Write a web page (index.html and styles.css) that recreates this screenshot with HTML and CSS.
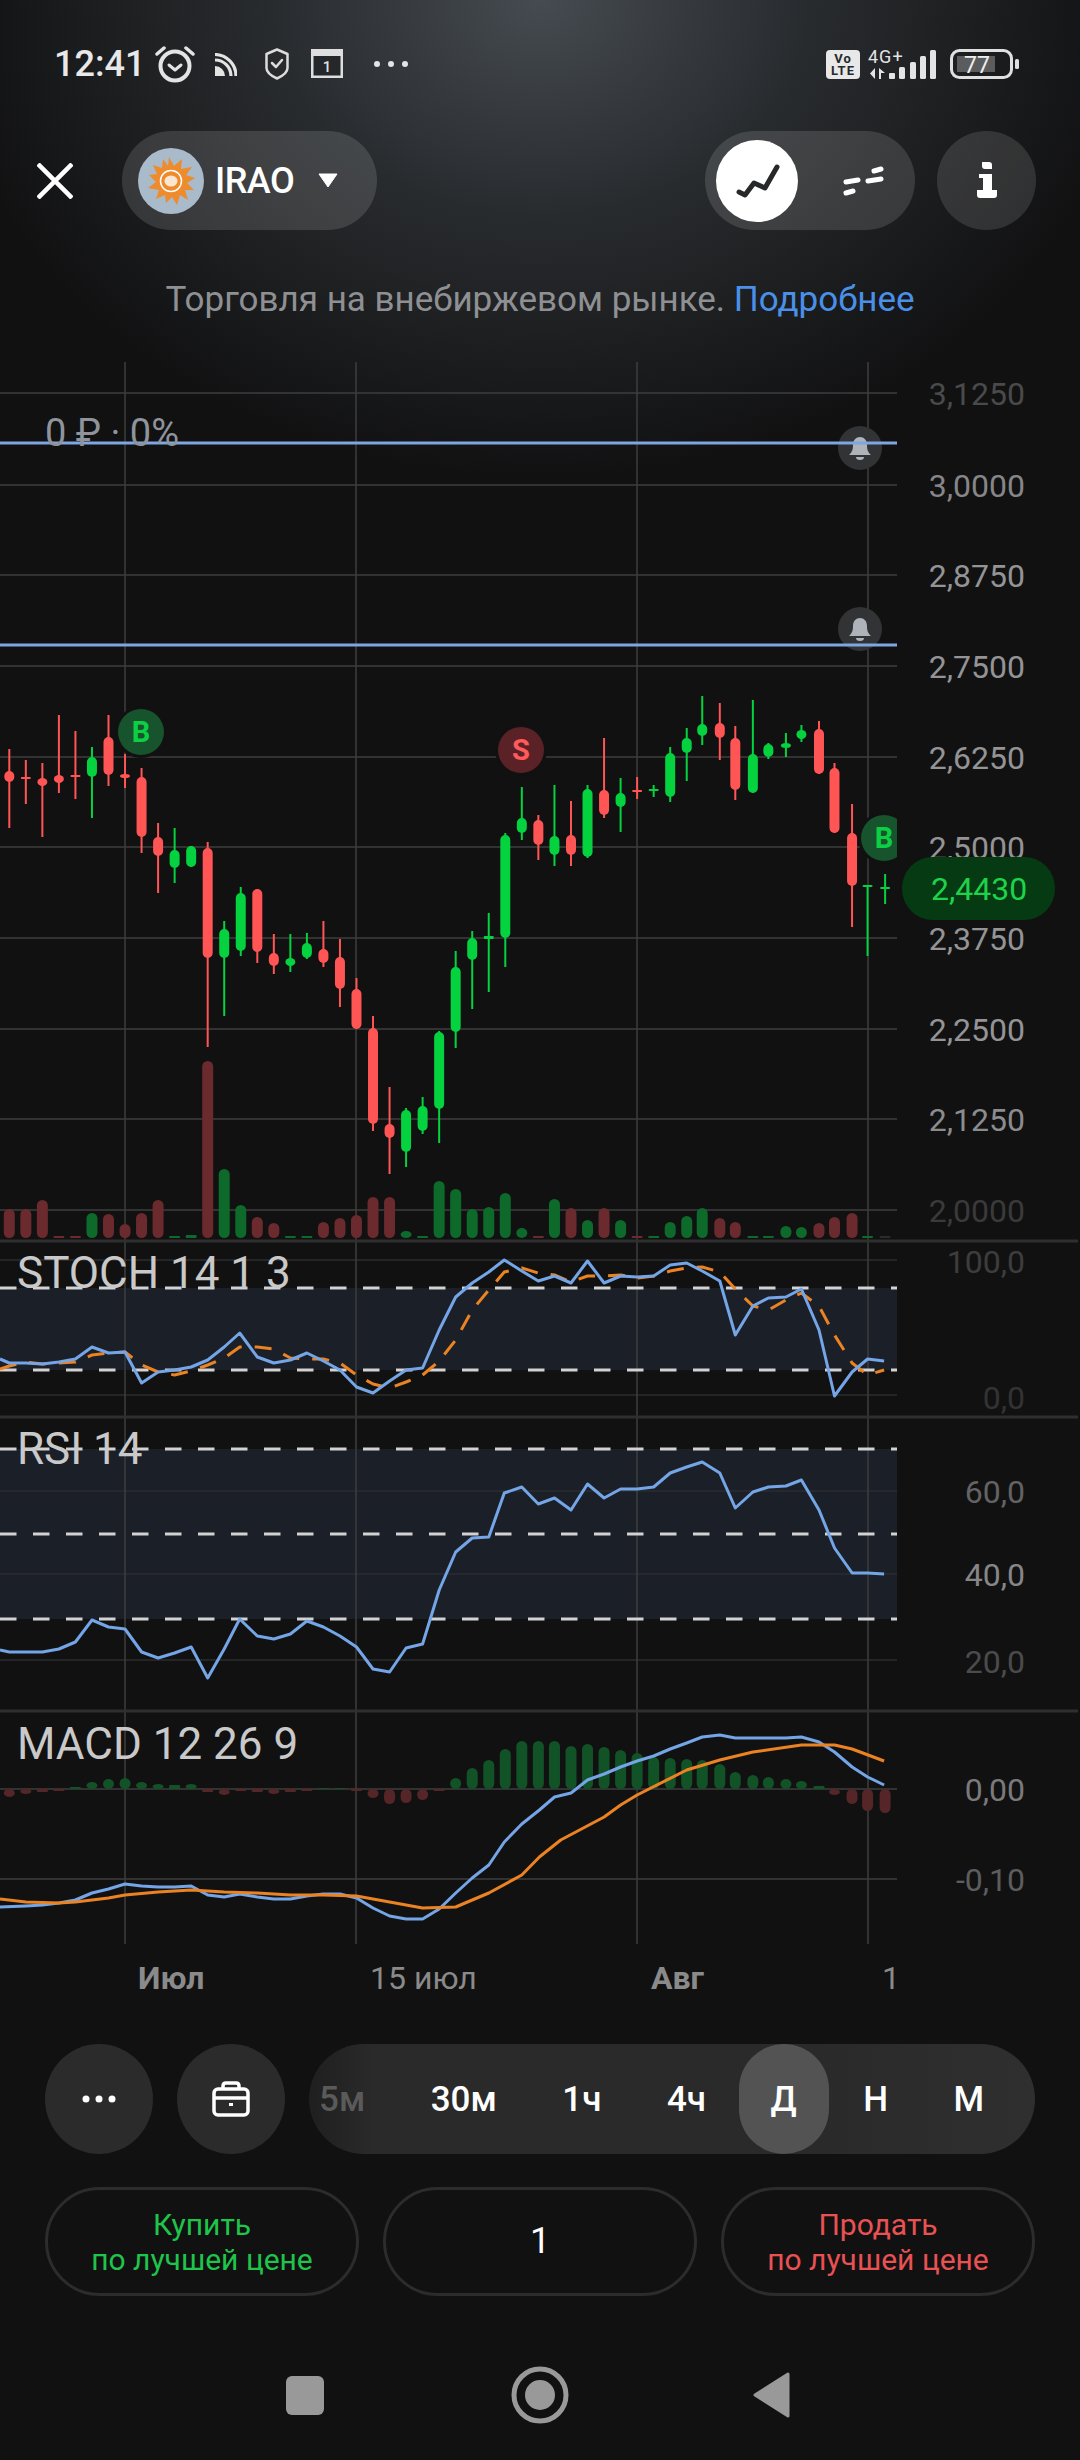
FILE: index.html
```html
<!DOCTYPE html>
<html lang="en">
<head>
    <meta charset="UTF-8">
    <meta name="viewport" content="width=device-width, initial-scale=1.0">
    <title>IRAO</title>
    <link rel="stylesheet" href="styles.css">
</head>
<body>
    <div class="page">
        <div class="status">
            <span class="clock">12:41</span>
            <svg class="st-alarm" width="40" height="38" viewBox="0 0 40 38" fill="none" stroke="#e4e4e4">
                <circle cx="20" cy="21" r="14.5" stroke-width="4"/>
                <path d="M14 20l6 5 6-5" stroke-width="3" stroke-linecap="round" stroke-linejoin="round"/>
                <path d="M2 9l7-6M38 9l-7-6" stroke-width="3.5" stroke-linecap="round"/>
            </svg>
            <svg class="st-rss" width="22" height="23" viewBox="0 0 22 23" fill="none" stroke="#e4e4e4" stroke-width="3.2">
                <path d="M0 7a16 16 0 0 1 16 16"/>
                <path d="M0 1.500a21.500 21.500 0 0 1 21 21.500"/>
                <path d="M0 13a10 10 0 0 1 10 10H0z" fill="#e4e4e4" stroke="none"/>
            </svg>
            <svg class="st-shield" width="24" height="32" viewBox="0 0 24 32" fill="none" stroke="#dcdcdc">
                <path d="M12 1.500 22.500 6v14c0 4-5 8-10.500 10.500C6.500 28 1.500 24 1.500 20V6z" stroke-width="2.500" stroke-linejoin="round"/>
                <path d="M7 15l4 4 6-7" stroke-width="2.500" stroke-linecap="round" stroke-linejoin="round"/>
            </svg>
            <svg class="st-cal" width="32" height="29" viewBox="0 0 32 29">
                <path d="M0 0h32v29H0z" fill="#dedede"/>
                <path d="M2.500 7h27v19.500h-27z" fill="#25282b"/>
                <text x="16" y="23" class="st-cal-num">1</text>
            </svg>
            <svg class="st-dots" width="36" height="8" viewBox="0 0 36 8" fill="#e4e4e4">
                <circle cx="4" cy="4" r="3"/><circle cx="18" cy="4" r="3"/><circle cx="32" cy="4" r="3"/>
            </svg>

            <svg class="st-net" width="114" height="42" viewBox="0 -6 114 42">
                <rect x="0" y="1" width="34" height="29" rx="4" fill="#e8e8e8"/>
                <text x="17" y="14" class="st-volte">Vo</text>
                <text x="17" y="26" class="st-volte">LTE</text>
                <text x="42" y="14" class="st-4g">4G+</text>
                <path d="M49 19v11l-5-5.500zM53 19v11h2v-6h4z" fill="#e4e4e4"/>
                <rect x="63" y="24" width="6" height="6" rx="1" fill="#e4e4e4"/>
                <rect x="73" y="18" width="6" height="12" rx="1.500" fill="#e4e4e4"/>
                <rect x="84" y="13" width="6" height="17" rx="1.500" fill="#e4e4e4"/>
                <rect x="94" y="7" width="6" height="23" rx="1.500" fill="#e4e4e4"/>
                <rect x="104" y="1" width="6" height="29" rx="1.500" fill="#e4e4e4"/>
            </svg>
            <svg class="st-batt" width="69" height="30" viewBox="0 0 69 30">
                <rect x="1.500" y="1.500" width="60" height="27" rx="8" fill="none" stroke="#e0e0e0" stroke-width="3"/>
                <rect x="7" y="7" width="38" height="16" fill="#5a5c5e"/>
                <text x="27" y="24" class="st-batt-num">77</text>
                <rect x="65" y="10" width="4" height="10" rx="1.500" fill="#e0e0e0"/>
            </svg>
        </div>

        <div class="nav">
            <svg class="close" width="36" height="36" viewBox="0 0 36 36" stroke="#fff" stroke-width="4.500">
                <path d="M1 1l34 34M35 1 1 35"/>
            </svg>
            <div class="ticker">
                <svg class="logo" width="66" height="66" viewBox="-33 -33 66 66">
                    <circle r="33" fill="#a9bacb"/>
                    <polygon fill="#ee8b2d" points="-2,-24 3,-15 11,-22 10,-12 21,-14 15,-6 24,-3 16,2 23,9 14,9 17,19 9,14 6,24 1,16 -5,22 -6,14 -15,18 -12,9 -23,7 -15,1 -22,-6 -14,-7 -18,-16 -9,-13 -8,-22 -3,-15"/>
                    <circle r="10.500" fill="#ee8b2d" stroke="#fff" stroke-width="1.500"/>
                    <ellipse rx="6.500" ry="5.500" fill="#fbe6d0"/>
                </svg>
                <span class="ticker-name">IRAO</span>
                <svg class="ticker-arrow" width="20" height="15" viewBox="0 0 20 15"><path d="M1 1h18L10 14z" fill="#fff" stroke="#fff" stroke-linejoin="round"/></svg>
            </div>
            <div class="modes">
                <div class="mode-on">
                    <svg width="82" height="82" viewBox="0 0 82 82" fill="none" stroke="#26282a" stroke-width="5" stroke-linecap="round" stroke-linejoin="round">
                        <path d="M23 52l6 3 9-12 11 5 12-21"/>
                    </svg>
                </div>
                <div class="mode-off">
                    <svg width="48" height="48" viewBox="0 0 48 48" fill="none" stroke="#fff" stroke-width="5" stroke-linecap="round">
                        <path d="M7 25l12-2M29 24l13-2M35 14l7-2M7 36l7-2"/>
                    </svg>
                </div>
            </div>
            <div class="info">
                <svg width="40" height="40" viewBox="-20 -20 40 40" fill="#fff">
                    <path d="M-5-19h7q3 0 3 3v4h-7q-3 0-3-3zM-8-7H5V9h5v5q0 3-3 3H-7q-3 0-3-3V9h6V-3h-4z"/>
                </svg>
            </div>
        </div>

        <div class="note">Торговля на внебиржевом рынке. <span class="note-link">Подробнее</span></div>

        <div id="chart" class="chart"></div>

        <div class="tools">
            <div class="round-btn">
                <svg width="36" height="8" viewBox="0 0 36 8" fill="#fff"><circle cx="5" cy="4" r="3.500"/><circle cx="18" cy="4" r="3.500"/><circle cx="31" cy="4" r="3.500"/></svg>
            </div>
            <div class="round-btn">
                <svg width="38" height="36" viewBox="0 0 38 36" fill="none" stroke="#fff" stroke-width="3.500" stroke-linejoin="round">
                    <rect x="2" y="8" width="34" height="26" rx="4"/>
                    <path d="M11 8V5q0-3 3-3h10q3 0 3 3v3M2 17h34"/>
                    <path d="M17 22h4v3h-4z" fill="#fff" stroke="none"/>
                </svg>
            </div>
            <div class="frames">
                <span class="frame frame-dim">5м</span>
                <span class="frame">30м</span>
                <span class="frame">1ч</span>
                <span class="frame">4ч</span>
                <span class="frame frame-on">Д</span>
                <span class="frame">Н</span>
                <span class="frame">М</span>
            </div>
        </div>

        <div class="actions">
            <div class="action action-buy">Купить<br>по лучшей цене</div>
            <div class="action action-qty">1</div>
            <div class="action action-sell">Продать<br>по лучшей цене</div>
        </div>

        <div class="sysnav">
            <div class="sys-square"></div>
            <svg width="58" height="58" viewBox="0 0 58 58" fill="none" stroke="#999">
                <circle cx="29" cy="29" r="26" stroke-width="5"/>
                <circle cx="29" cy="29" r="15" fill="#999" stroke="none"/>
            </svg>
            <svg width="38" height="46" viewBox="0 0 38 46">
                <path d="M35 2 2 23l33 21z" fill="#999" stroke="#999" stroke-width="3" stroke-linejoin="round"/>
            </svg>
        </div>
    </div>

    <script src="chart.js"></script>
</body>
</html>
```

FILE: styles.css
```css
* {
    box-sizing: border-box;
}
body {
    margin: 0;
    background-color: #111112;
    font-family: Roboto, 'Liberation Sans', sans-serif;
    color: #fff;
}
.page {
    width: 1080px;
    height: 2460px;
    overflow: hidden;
    background:
        radial-gradient(ellipse 600px 480px at 50% 0, rgba(72, 78, 84, 0.95) 0%, rgba(50, 54, 58, 0.7) 45%, rgba(17, 17, 18, 0) 100%),
        #111112;
}

/* status bar */
.status {
    display: flex;
    align-items: flex-start;
    height: 131px;
    padding: 45px 0 0 54px;
}
.clock {
    font-size: 36px;
    font-weight: 500;
    line-height: 38px;
    color: #e8e8e8;
}
.st-alarm { margin-left: 10px; }
.st-rss { margin: 8px 0 0 20px; }
.st-shield { margin: 3px 0 0 28px; }
.st-cal { margin: 4px 0 0 22px; }
.st-dots { margin: 15px 0 0 30px; }
.st-net { margin: -2px 0 0 auto; }
.st-batt { margin: 4px 61px 0 10px; }
.st-cal-num {
    font-size: 15px;
    font-weight: 500;
    fill: #e0e0e0;
    text-anchor: middle;
}
.st-volte {
    font-size: 13px;
    font-weight: 700;
    letter-spacing: 1px;
    fill: #26282a;
    text-anchor: middle;
}
.st-4g {
    font-size: 18px;
    letter-spacing: 1px;
    fill: #e4e4e4;
}
.st-batt-num {
    font-size: 23px;
    fill: #eee;
    text-anchor: middle;
}

/* top controls */
.nav {
    display: flex;
    align-items: center;
    height: 99px;
    padding: 0 44px 0 37px;
}
.close {
    margin-right: 49px;
}
.ticker {
    display: flex;
    align-items: center;
    width: 255px;
    height: 99px;
    padding-left: 16px;
    border-radius: 50px;
    background-color: rgba(255, 255, 255, 0.13);
}
.ticker-name {
    margin-left: 11px;
    font-size: 36px;
    font-weight: 500;
    letter-spacing: -0.5px;
}
.ticker-arrow {
    margin-left: 24px;
}
.modes {
    display: flex;
    align-items: center;
    width: 210px;
    height: 99px;
    margin-left: auto;
    padding-left: 11px;
    border-radius: 50px;
    background-color: rgba(255, 255, 255, 0.13);
}
.mode-on {
    width: 82px;
    height: 82px;
    border-radius: 50%;
    background-color: #fff;
}
.mode-off {
    width: 48px;
    height: 48px;
    margin-left: 41px;
}
.info {
    display: flex;
    justify-content: center;
    align-items: center;
    width: 99px;
    height: 99px;
    margin-left: 22px;
    border-radius: 50%;
    background-color: rgba(255, 255, 255, 0.12);
}
.note {
    height: 132px;
    padding-top: 50px;
    font-size: 35px;
    line-height: 40px;
    text-align: center;
    color: #8e9093;
}
.note-link {
    color: #4a8fe8;
}

/* chart */
.chart {
    height: 1638px;
}
.chart svg {
    display: block;
}
.grid {
    stroke: #3e3e3f;
    stroke-width: 1.5;
}
.grid-faint {
    stroke: #2b2c2f;
    stroke-width: 1.5;
}
.sep {
    stroke: #2f2f30;
    stroke-width: 3;
}
.band {
    fill: #1b1f28;
}
.dash {
    stroke: #d2d2d2;
    stroke-width: 3;
    stroke-dasharray: 16.500 16.500;
}
.alert-line {
    stroke: #7fa6e2;
    stroke-width: 3;
}
.blue-line {
    fill: none;
    stroke: #74a5e6;
    stroke-width: 3;
    stroke-linejoin: round;
}
.orange-line {
    fill: none;
    stroke: #ec8322;
    stroke-width: 3;
    stroke-linejoin: round;
}
.orange-dash {
    stroke-dasharray: 17 13;
}
.axis {
    font-size: 32px;
    text-anchor: end;
}
.pane-title {
    font-size: 44px;
    fill: #c9c9c9;
}
.pnl {
    font-size: 38px;
    fill: #8f949c;
}
.time {
    font-size: 32px;
    fill: #8a8a8a;
}
.time-bold {
    font-weight: 700;
}
.badge {
    font-size: 29px;
    font-weight: 700;
    text-anchor: middle;
}
.price-tag {
    font-size: 32px;
    fill: #1fd24c;
    text-anchor: middle;
}

/* bottom controls */
.tools {
    display: flex;
    gap: 24px;
    height: 110px;
    margin-top: 44px;
    padding: 0 45px;
}
.round-btn {
    display: flex;
    flex: none;
    justify-content: center;
    align-items: center;
    width: 108px;
    height: 110px;
    border-radius: 50%;
    background-color: #2b2b2b;
}
.frames {
    display: flex;
    flex: 1;
    align-items: center;
    gap: 65.500px;
    padding-left: 10px;
    border-radius: 55px;
    background: linear-gradient(90deg, #1f1f1f 0%, #2a2a2a 9%, #2a2a2a 70%, #2f2f2f 100%);
    font-size: 35px;
    font-weight: 500;
}
.frame-dim {
    color: #5a5a5a;
}
.frame-on {
    display: flex;
    align-items: center;
    height: 110px;
    margin: 0 -31px 0 -33px;
    padding: 0 32px;
    border-radius: 45px;
    background-color: #535353;
}
.actions {
    display: flex;
    gap: 24px;
    height: 109px;
    margin-top: 33px;
    padding: 0 45px;
}
.action {
    display: flex;
    flex: 1;
    justify-content: center;
    align-items: center;
    border: 3px solid #2c2c2d;
    border-radius: 55px;
    font-size: 30px;
    line-height: 35px;
    text-align: center;
}
.action-buy {
    color: #1fc44a;
}
.action-sell {
    color: #e85252;
}
.action-qty {
    font-size: 36px;
}
.sysnav {
    display: flex;
    align-items: center;
    gap: 184px;
    height: 58px;
    margin-top: 70px;
    padding-left: 286px;
}
.sys-square {
    width: 38px;
    height: 39px;
    margin-right: 3px;
    border-radius: 6px;
    background-color: #999;
}
```

FILE: chart.js
```js
const NS = 'http://www.w3.org/2000/svg';
const PLOT_RIGHT = 897;
const RED = '#ff5555';
const GREEN = '#05d23f';

// data x values are sampled at 0.968 horizontal scale, sx() puts them on the page
function sx(x) {
    return x < 530 ? x * 1.0333 : 540 + (x - 540) * 1.0333;
}

function points(str) {
    return str.split(' ').map(p => {
        const parts = p.split(',');
        return sx(+parts[0]).toFixed(1) + ',' + parts[1];
    }).join(' ');
}

// x, wick top, wick bottom, body top, body bottom, up?
const candles = [
    [9,749,828,771,782,0],[25,760,804,777,779,0],[41,763,837,778,786,0],[57,715,793,775,783,0],
    [73,731,799,775,777,0],[89,747,818,757,777,1],[105,715,786,737,775,0],[121,754,788,774,778,0],
    [137,768,853,777,837,0],[153,823,893,837,856,0],[169,828,883,850,868,1],[185,846,867,846,867,1],
    [201,842,1047,848,958,0],[217,921,1016,929,958,1],[233,887,956,893,951,1],[249,889,963,889,952,0],
    [265,934,974,953,966,0],[281,934,972,958,966,1],[297,933,959,943,958,1],[313,921,967,949,963,0],
    [329,939,1007,957,989,0],[345,978,1029,989,1029,0],[361,1016,1131,1028,1124,0],[377,1087,1174,1124,1138,0],
    [393,1108,1167,1110,1152,1],[409,1097,1134,1106,1131,1],[425,1031,1143,1032,1109,1],[441,951,1048,967,1032,1],
    [457,931,1009,938,960,1],[473,913,992,936,939,1],[489,833,967,835,938,1],[505,787,840,818,833,1],
    [521,815,860,820,845,0],[554,785,866,836,855,1],[570,801,866,835,855,0],[586,785,858,789,857,1],
    [602,738,818,790,815,0],[618,778,832,793,807,1],[634,777,799,790,792,0],[650,785,797,789,791,1],
    [666,747,802,753,797,1],[682,728,781,738,753,1],[697,696,745,724,736,1],[714,703,760,723,738,0],
    [729,726,800,738,790,0],[746,700,793,754,793,1],[761,743,759,744,757,1],[778,733,757,743,748,1],
    [793,725,742,730,739,1],[810,721,774,729,774,0],[825,763,833,768,833,0],[842,804,927,833,886,0],
    [857,885,956,885,887,1],[874,874,904,887,889,1]
];

// x, top of bar, up?  (base is at 1238)
const volumes = [
    [9,1209,0],[25,1209,0],[41,1200,0],[57,1236,0],[73,1236,0],[89,1213,1],[105,1214,0],[121,1224,0],
    [137,1213,0],[153,1200,0],[169,1236,1],[185,1235,1],[201,1061,0],[217,1169,1],[233,1205,1],[249,1217,0],
    [265,1223,0],[281,1236,1],[297,1236,1],[313,1222,0],[329,1218,0],[345,1215,0],[361,1197,0],[377,1197,0],
    [393,1231,1],[409,1236,1],[425,1181,1],[441,1189,1],[457,1209,1],[473,1207,1],[489,1193,1],[505,1228,1],
    [521,1236,0],[554,1199,1],[570,1208,0],[586,1220,1],[602,1208,0],[618,1220,1],[634,1236,0],[650,1236,1],
    [666,1222,1],[682,1216,1],[697,1208,1],[714,1218,0],[729,1222,0],[746,1236,1],[761,1236,1],[778,1226,1],
    [793,1227,1],[810,1223,0],[825,1217,0],[842,1213,0],[857,1236,1],[874,1236,2]
];

// x, end of bar (zero line is at 1789)
const histogram = [
    [9,1797],[25,1794],[41,1792],[57,1791],[73,1787],[89,1782],[105,1779],[121,1778],[137,1782],[153,1784],
    [169,1785],[185,1784],[201,1792],[217,1795],[233,1791],[249,1792],[265,1794],[281,1792],[297,1791],[313,1788],
    [329,1788],[345,1791],[361,1798],[377,1804],[393,1803],[409,1800],[425,1791],[441,1778],[457,1768],[473,1760],
    [489,1749],[505,1741],[521,1741],[554,1741],[570,1746],[586,1744],[602,1747],[618,1750],[634,1753],
    [650,1757],[666,1758],[682,1759],[697,1760],[714,1764],[729,1772],[746,1775],[761,1777],[778,1779],[793,1781],
    [810,1786],[825,1795],[842,1804],[857,1811],[874,1813]
];

const stochBlue = '0,1359 9,1363 25,1363 41,1364 57,1362 73,1359 89,1347 105,1353 121,1352 137,1383 153,1372 169,1370 185,1367 201,1360 217,1347 232,1333 249,1357 265,1363 281,1360 297,1353 313,1361 329,1370 345,1387 361,1393 377,1381 393,1370 409,1368 425,1330 441,1297 457,1283 473,1272 488,1260 505,1271 521,1281 554,1276 570,1283 586,1261 602,1283 618,1276 634,1277 650,1276 666,1265 682,1263 697,1271 714,1281 729,1335 746,1306 761,1298 778,1297 793,1289 810,1330 825,1396 842,1372 857,1359 873,1361';
const stochOrange = '0,1369 9,1366 25,1362 41,1364 57,1363 73,1362 89,1355 105,1353 121,1352 137,1365 153,1372 169,1375 185,1371 201,1365 217,1358 232,1347 249,1347 265,1349 281,1358 297,1359 313,1359 329,1363 345,1375 361,1384 377,1388 393,1382 409,1375 425,1361 441,1340 457,1310 473,1290 488,1272 505,1268 521,1273 554,1275 570,1282 586,1276 602,1276 618,1275 634,1278 650,1276 666,1271 682,1268 697,1267 714,1272 729,1289 746,1306 761,1310 778,1300 793,1293 810,1306 825,1335 842,1363 857,1375 873,1370';
const rsiBlue = '0,1650 9,1652 25,1652 41,1652 57,1649 73,1642 89,1620 105,1627 121,1629 137,1652 153,1658 169,1653 185,1647 201,1678 217,1649 232,1619 249,1636 265,1639 281,1634 297,1621 313,1627 329,1636 345,1647 361,1669 377,1672 393,1648 409,1644 425,1590 441,1552 457,1538 473,1537 488,1493 505,1487 521,1504 554,1498 570,1510 586,1484 602,1498 618,1489 634,1489 650,1487 666,1473 682,1467 697,1462 714,1473 729,1508 746,1492 761,1487 778,1486 793,1480 810,1510 825,1548 842,1573 857,1573 873,1574';
const macdBlue = '0,1907 25,1906 41,1905 57,1903 73,1900 89,1893 105,1889 121,1884 137,1886 153,1887 169,1887 185,1886 201,1895 217,1897 232,1894 249,1897 265,1899 281,1899 297,1896 313,1894 329,1894 345,1898 361,1908 377,1916 393,1919 409,1919 425,1909 441,1893 457,1878 473,1865 488,1842 505,1824 522,1810 554,1797 570,1793 586,1780 602,1774 618,1767 634,1761 650,1756 666,1749 682,1743 697,1737 714,1735 729,1738 746,1738 761,1738 778,1738 793,1737 810,1742 825,1752 842,1767 857,1777 873,1785';
const macdOrange = '0,1899 25,1902 57,1903 73,1902 89,1900 105,1898 121,1895 153,1892 185,1890 217,1892 249,1893 281,1895 313,1895 345,1896 377,1902 409,1908 441,1907 473,1893 505,1875 522,1857 560,1840 602,1817 618,1805 634,1795 682,1770 714,1760 746,1752 793,1745 825,1745 842,1749 873,1761';

// text, y, colour
const priceLabels = [
    ['3,1250',393,'#4a4a4b'],['3,0000',485,'#868688'],['2,8750',575,'#949496'],['2,7500',666,'#949496'],
    ['2,6250',757,'#949496'],['2,5000',847,'#949496'],['2,3750',938,'#949496'],['2,2500',1029,'#949496'],
    ['2,1250',1119,'#8c8c8e'],['2,0000',1210,'#3a3a3b'],['100,0',1261,'#3d3d3e'],['0,0',1397,'#333334'],
    ['60,0',1491,'#636364'],['40,0',1574,'#868688'],['20,0',1661,'#4b4b4c'],['0,00',1789,'#7a7a7c'],['-0,10',1879,'#5d5d5e']
];

const gridY = [393,485,575,666,757,847,938,1029,1119,1210,1789,1879];
const faintY = [1260,1395,1491,1574,1660];
const gridX = [125,356,637,868];
const dashY = [1288,1370,1449,1534,1619];

const svg = document.createElementNS(NS, 'svg');
svg.setAttribute('width', 1080);
svg.setAttribute('height', 1638);
svg.setAttribute('viewBox', '0 362 1080 1638');
document.getElementById('chart').appendChild(svg);

function add(tag, attrs, parent) {
    const el = document.createElementNS(NS, tag);
    for (const key in attrs) el.setAttribute(key, attrs[key]);
    (parent || svg).appendChild(el);
    return el;
}

function addText(str, attrs) {
    add('text', attrs).textContent = str;
}

function hline(y, cls, right) {
    add('line', {x1: 0, x2: right || PLOT_RIGHT, y1: y, y2: y, class: cls});
}

function badge(x, y, letter, bg, fg) {
    add('circle', {cx: x, cy: y, r: 26, fill: '#111112', 'clip-path': 'url(#plot)'});
    add('circle', {cx: x, cy: y, r: 23, fill: bg, 'clip-path': 'url(#plot)'});
    addText(letter, {x: x, y: y + 10, fill: fg, class: 'badge', 'clip-path': 'url(#plot)'});
}

function bell(cx, cy) {
    add('circle', {cx: cx, cy: cy, r: 22, fill: '#323334'});
    add('path', {
        d: 'M-11 8c3-3 4-5 4-10 0-5 3-8 7-8s7 3 7 8c0 5 1 7 4 10zM-4 10a4 3 0 0 0 8 0z',
        transform: `translate(${cx} ${cy - 1})`,
        fill: '#aeb3ba'
    });
}

// clip for everything that stops at the price axis
const defs = add('defs', {});
const clip = add('clipPath', {id: 'plot'}, defs);
add('rect', {x: 0, y: 362, width: PLOT_RIGHT, height: 1638}, clip);

// indicator bands
add('rect', {x: 0, y: 1288, width: PLOT_RIGHT, height: 82, class: 'band'});
add('rect', {x: 0, y: 1449, width: PLOT_RIGHT, height: 170, class: 'band'});

// grid
gridY.forEach(y => hline(y, 'grid'));
faintY.forEach(y => hline(y, 'grid-faint'));
gridX.forEach(x => add('line', {x1: x, x2: x, y1: 362, y2: 1944, class: 'grid'}));
[1241, 1417, 1711].forEach(y => hline(y, 'sep', 1078));
dashY.forEach(y => hline(y, 'dash'));

// volume
const plot = add('g', {'clip-path': 'url(#plot)'});
volumes.forEach(v => {
    const fill = v[2] === 2 ? '#2c2c2c' : (v[2] ? '#0e6a2a' : '#6b2a2d');
    const h = 1238 - v[1];
    add('rect', {x: sx(v[0]) - 5.5, y: v[1], width: 11, height: h, rx: h < 5 ? 1 : 5.5, fill: fill}, plot);
});

// candles
candles.forEach(c => {
    const fill = c[5] ? GREEN : RED;
    const h = c[4] - c[3];
    const x = sx(c[0]);
    add('rect', {x: x - 1, y: c[1], width: 2, height: c[2] - c[1], fill: fill}, plot);
    add('rect', {x: x - 5, y: c[3], width: 10, height: h, rx: h < 4 ? 1 : 5, fill: fill}, plot);
});

// macd histogram
histogram.forEach(b => {
    const top = Math.min(b[1], 1789);
    const h = Math.abs(b[1] - 1789);
    add('rect', {x: sx(b[0]) - 5.5, y: top, width: 11, height: h, rx: h < 5 ? 1 : 5.5,
        fill: b[1] > 1789 ? '#552527' : '#115326'}, plot);
});

// alerts
bell(860, 448);
bell(860, 629);
hline(443, 'alert-line');
hline(645, 'alert-line');
addText('0 ₽ · 0%', {x: 45, y: 446, class: 'pnl'});

// buy and sell marks
badge(141, 732, 'B', '#17532c', '#0ccf44');
badge(521, 750, 'S', '#5a2226', '#ff5a5a');
badge(884, 838, 'B', '#17532c', '#0ccf44');

// indicator lines
add('polyline', {points: points(stochOrange), class: 'orange-line orange-dash'});
add('polyline', {points: points(stochBlue), class: 'blue-line'});
add('polyline', {points: points(rsiBlue), class: 'blue-line'});
add('polyline', {points: points(macdBlue), class: 'blue-line'});
add('polyline', {points: points(macdOrange), class: 'orange-line'});

// axis
priceLabels.forEach(l => addText(l[0], {x: 1025, y: l[1] + 12, fill: l[2], class: 'axis'}));
add('rect', {x: 902, y: 857, width: 153, height: 63, rx: 31, fill: '#053a12'});
addText('2,4430', {x: 979, y: 900, class: 'price-tag'});

// pane titles
addText('STOCH 14 1 3', {x: 17, y: 1288, class: 'pane-title'});
addText('RSI 14', {x: 17, y: 1464, class: 'pane-title'});
addText('MACD 12 26 9', {x: 17, y: 1759, class: 'pane-title'});

// time axis
addText('Июл', {x: 138, y: 1989, class: 'time time-bold'});
addText('15 июл', {x: 370, y: 1989, class: 'time'});
addText('Авг', {x: 651, y: 1989, class: 'time time-bold'});
addText('1', {x: 882, y: 1989, class: 'time'});
```
